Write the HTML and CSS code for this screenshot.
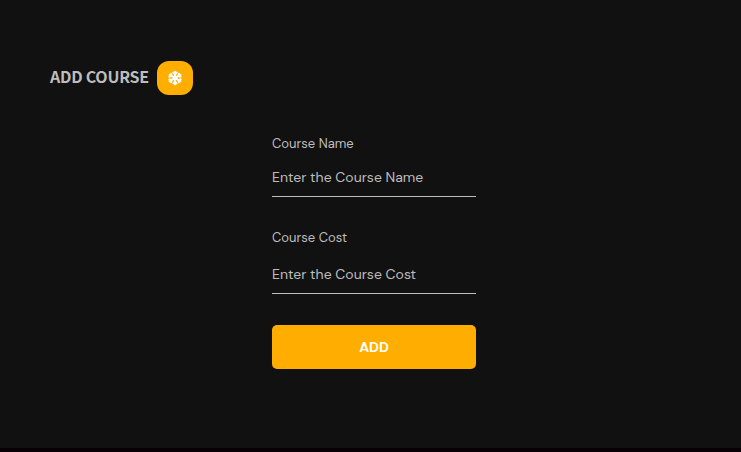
FILE: index.html
```html
<!DOCTYPE html>
<html lang="en">
<head>
<meta charset="utf-8">
<title>Add Course</title>
<link rel="stylesheet" href="styles.css">
</head>
<body>
<main class="panel">
  <header class="heading">
    <h1 class="title">ADD COURSE</h1>
    <span class="badge">
      <svg class="flake" viewBox="0 0 14 16" aria-hidden="true">
        <g fill="none" stroke="#fff" stroke-width="2.1" stroke-linecap="round" stroke-linejoin="round">
          <path d="M7 1.8V14.2M1.6 4.9L12.4 11.1M1.6 11.1L12.4 4.9"/>
          <path d="M5.3 2.6L7 4.2L8.7 2.6M5.3 13.4L7 11.8L8.7 13.4M1.4 6.7L3.6 6.1L3.1 3.8M12.6 9.3L10.4 9.9L10.9 12.2M1.4 9.3L3.6 9.9L3.1 12.2M12.6 6.7L10.4 6.1L10.9 3.8" stroke-width="1.9"/>
        </g>
      </svg>
    </span>
  </header>
  <form class="form">
    <label class="label label-name" for="name">Course Name</label>
    <input class="input input-name" id="name" type="text" placeholder="Enter the Course Name">
    <label class="label label-cost" for="cost">Course Cost</label>
    <input class="input input-cost" id="cost" type="text" placeholder="Enter the Course Cost">
    <button class="submit" type="button">ADD</button>
  </form>
</main>
</body>
</html>
```
FILE: styles.css
```css
* {
  box-sizing: border-box;
}

body {
  margin: 0;
  background: #080004;
  font-family: "DM Sans", Inter, sans-serif;
  color: #bdbdbd;
}

.panel {
  height: 448px;
  padding-top: 61px;
  background: #111;
}

.heading {
  display: flex;
  align-items: center;
  gap: 8px;
  height: 34px;
  margin-left: 50px;
}

.title {
  width: 99px;
  margin: 0;
  padding-bottom: 4px;
  font: 700 16px/30px "Noto Sans CJK SC", "Noto Sans", sans-serif;
  letter-spacing: -0.25px;
  white-space: nowrap;
}

.badge {
  display: flex;
  align-items: center;
  justify-content: center;
  width: 36px;
  height: 34px;
  border-radius: 12px;
  background: #ffae00;
}

.flake {
  width: 14px;
  height: 16px;
}

.form {
  display: flex;
  flex-direction: column;
  width: 204px;
  margin: 39px 0 0 272px;
}

.label {
  height: 20px;
  font-size: 13px;
  line-height: 20px;
}

.input {
  width: 100%;
  height: 38px;
  padding: 0 0 2px;
  border: 0;
  border-bottom: 1px solid #bdbdbd;
  border-radius: 0;
  outline: 0;
  background: transparent;
  color: #bdbdbd;
  font: 400 14px "DM Sans", Inter, sans-serif;
}

.input::placeholder {
  color: #bdbdbd;
  opacity: 1;
}

.input-name {
  margin-top: 5px;
}

.label-cost {
  margin-top: 31px;
}

.input-cost {
  margin-top: 8px;
}

.submit {
  height: 44px;
  margin-top: 31px;
  padding: 0;
  border: 0;
  border-radius: 5px;
  background: #ffae00;
  color: #fff;
  font: 700 14px "DM Sans", Inter, sans-serif;
}
```
